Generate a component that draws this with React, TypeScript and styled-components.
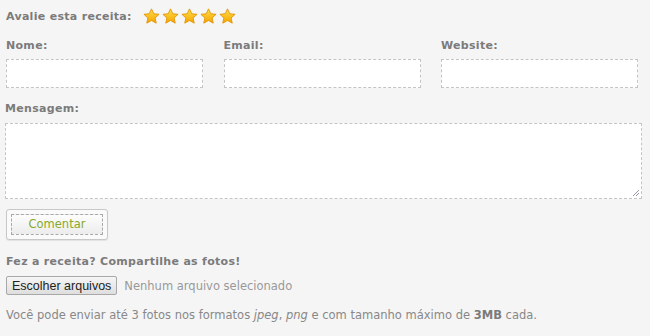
import React from "react";
import styled, { createGlobalStyle } from "styled-components";

const Global = createGlobalStyle`
  html, body { margin: 0; padding: 0; background: #f5f5f5; }
  body { font-family: "DejaVu Sans", Verdana, sans-serif; }
`;

const Page = styled.div`
  width: 650px;
  height: 336px;
  box-sizing: border-box;
  padding: 4px 9px 0 5px;
  background: #f5f5f5;
  color: #888;
  font-size: 11px;
`;

const RatingRow = styled.div`
  display: flex;
  align-items: center;
  gap: 11px;
  height: 24px;
  padding-left: 1px;
`;

const Label = styled.label`
  display: block;
  font-weight: bold;
  font-size: 11px;
  color: #7b7b7b;
  letter-spacing: 0.3px;
`;

const Stars = styled.div`
  display: flex;
  gap: 2px;
`;

const Fields = styled.div`
  display: grid;
  grid-template-columns: 197px 197px 197px;
  column-gap: 20.5px;
  margin-top: 11px;
  padding-left: 1px;
`;

const Field = styled.div`
  display: flex;
  flex-direction: column;
  gap: 7px;
`;

const Input = styled.div`
  height: 29px;
  box-sizing: border-box;
  border: 1px dashed #c4c4c4;
  background: #fff;
`;

const MessageBlock = styled.div`
  display: flex;
  flex-direction: column;
  gap: 8px;
  margin-top: 14px;
`;

const TextArea = styled.div`
  position: relative;
  height: 76px;
  width: 637px;
  box-sizing: border-box;
  border: 1px dashed #c4c4c4;
  background: #fff;
`;

const Grip = styled.svg`
  position: absolute;
  right: 1px;
  bottom: 1px;
`;

const ButtonOuter = styled.div`
  margin-top: 10px;
  margin-left: 1px;
  width: 102px;
  height: 31px;
  box-sizing: border-box;
  border: 1px solid #c8c8c8;
  border-radius: 3px;
  background: #fafafa;
  padding: 4px;
  box-shadow: 0 1px 1px rgba(0,0,0,0.08);
`;

const ButtonInner = styled.div`
  height: 100%;
  box-sizing: border-box;
  border: 1px dashed #a9a9a9;
  background: linear-gradient(#fdfdfd, #ececec);
  color: #8aa92a;
  font-size: 11.5px;
  display: flex;
  align-items: center;
  justify-content: center;
  padding-bottom: 1px;
`;

const Heading = styled.div`
  margin-top: 15px;
  margin-left: 1px;
  font-weight: bold;
  font-size: 11px;
  color: #7b7b7b;
  letter-spacing: 0.3px;
`;

const FileRow = styled.div`
  display: flex;
  align-items: center;
  gap: 7px;
  margin-top: 8px;
  margin-left: 1px;
`;

const FileButton = styled.div`
  height: 19px;
  box-sizing: border-box;
  padding: 0 5px;
  border: 1px solid #a8a8a8;
  border-radius: 2px;
  background: linear-gradient(#f6f6f6, #dedede);
  color: #222;
  font-family: "Liberation Sans", Arial, sans-serif;
  font-size: 12.5px;
  display: flex;
  align-items: center;
`;

const FileStatus = styled.span`
  color: #999;
  font-size: 11.5px;
`;

const Note = styled.p`
  margin: 13px 0 0 1px;
  font-size: 11.5px;
  color: #888;
  em { font-style: italic; }
  strong { font-weight: bold; color: #7b7b7b; }
`;

const Star = () => (
  <svg width="17" height="17" viewBox="0 0 24 24">
    <defs>
      <linearGradient id="sg" x1="0" y1="0" x2="0" y2="1">
        <stop offset="0" stopColor="#ffe14a" />
        <stop offset="1" stopColor="#f5a300" />
      </linearGradient>
    </defs>
    <path
      d="M12 1.2l3.2 6.9 7.5.8-5.6 5.1 1.6 7.4L12 17.6l-6.7 3.8 1.6-7.4-5.6-5.1 7.5-.8z"
      fill="url(#sg)"
      stroke="#e09000"
      strokeWidth="1.2"
      strokeLinejoin="round"
    />
  </svg>
);

export default function App() {
  return (
    <>
      <Global />
      <Page>
        <RatingRow>
          <Label as="span">Avalie esta receita:</Label>
          <Stars>
            {[0, 1, 2, 3, 4].map((i) => (
              <Star key={i} />
            ))}
          </Stars>
        </RatingRow>
        <Fields>
          <Field>
            <Label>Nome:</Label>
            <Input />
          </Field>
          <Field>
            <Label>Email:</Label>
            <Input />
          </Field>
          <Field>
            <Label>Website:</Label>
            <Input />
          </Field>
        </Fields>
        <MessageBlock>
          <Label>Mensagem:</Label>
          <TextArea>
            <Grip width="9" height="9" viewBox="0 0 9 9">
              <path d="M8 2L2 8M8 5L5 8" stroke="#9a94a8" strokeWidth="1" />
            </Grip>
          </TextArea>
        </MessageBlock>
        <ButtonOuter>
          <ButtonInner>Comentar</ButtonInner>
        </ButtonOuter>
        <Heading>Fez a receita? Compartilhe as fotos!</Heading>
        <FileRow>
          <FileButton>Escolher arquivos</FileButton>
          <FileStatus>Nenhum arquivo selecionado</FileStatus>
        </FileRow>
        <Note>
          Você pode enviar até 3 fotos nos formatos <em>jpeg</em>, <em>png</em> e com
          tamanho máximo de <strong>3MB</strong> cada.
        </Note>
      </Page>
    </>
  );
}
